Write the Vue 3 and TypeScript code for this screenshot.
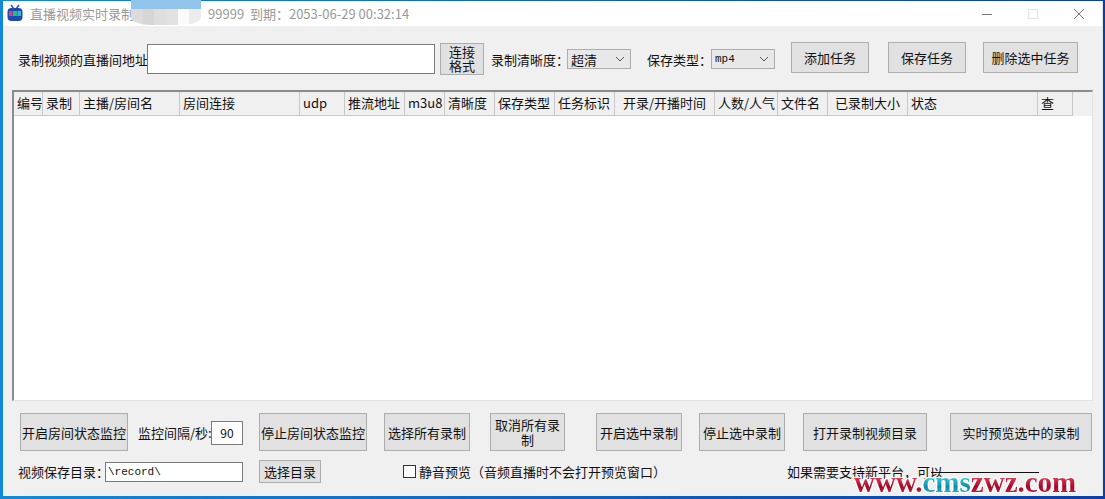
<template>
  <div class="desktop">
    <div class="window">
      <div class="titlebar">
        <svg class="app-icon" width="16" height="18" viewBox="0 0 16 18">
          <path d="M4 1 L7 5 M12 1 L9 5" stroke="#2a4fa8" stroke-width="1.4" fill="none" />
          <rect x="0.5" y="4" width="15" height="13" rx="4" fill="#1d49b5" />
          <rect x="2" y="7" width="3.5" height="5" fill="#e8397a" />
          <rect x="6" y="7" width="4" height="5" fill="#27c26a" />
          <rect x="10.5" y="7" width="3.5" height="5" fill="#35b6d8" />
        </svg>
        <span class="title">直播视频实时录制--</span>
        <span class="title title--hidden">当前版本：99999&nbsp;&nbsp;到期：2053-06-29 00:32:14</span>
        <div class="win-controls">
          <svg width="12" height="12" viewBox="0 0 12 12"><path d="M1 6.5H11" stroke="#777" /></svg>
          <svg width="12" height="12" viewBox="0 0 12 12"><rect x="1.5" y="1.5" width="9" height="9" fill="none" stroke="#e3e3e3" /></svg>
          <svg width="12" height="12" viewBox="0 0 12 12"><path d="M1 1L11 11M11 1L1 11" stroke="#777" /></svg>
        </div>
        <!-- smudge over the account name -->
        <div class="smudge">
          <div class="smudge__top"></div>
          <div class="smudge__cells">
            <i v-for="c in smudgeCells" :key="c" :style="{ background: c }"></i>
          </div>
        </div>
      </div>

      <div class="content">
        <div class="toolbar">
          <span class="label label--url">录制视频的直播间地址：</span>
          <div class="input input--url"></div>
          <button class="btn btn--format">连接<br />格式</button>
          <span class="label label--quality">录制清晰度：</span>
          <div class="select select--quality">
            <span>超清</span>
            <svg width="10" height="6" viewBox="0 0 10 6"><path d="M1 1L5 5L9 1" fill="none" stroke="#555" /></svg>
          </div>
          <span class="label label--type">保存类型：</span>
          <div class="select select--type">
            <span class="mono">mp4</span>
            <svg width="10" height="6" viewBox="0 0 10 6"><path d="M1 1L5 5L9 1" fill="none" stroke="#555" /></svg>
          </div>
          <button class="btn btn--add">添加任务</button>
          <button class="btn btn--save">保存任务</button>
          <button class="btn btn--del">删除选中任务</button>
        </div>

        <div class="table">
          <div class="thead">
            <div
              v-for="col in columns"
              :key="col.name"
              class="th"
              :class="{ 'th--center': col.center }"
              :style="{ width: col.width + 'px' }"
            >{{ col.name }}</div>
          </div>
        </div>

        <div class="actions">
          <button class="btn btn--a1">开启房间状态监控</button>
          <span class="label label--interval">监控间隔/秒:</span>
          <div class="input input--interval">90</div>
          <button class="btn btn--a2">停止房间状态监控</button>
          <button class="btn btn--a3">选择所有录制</button>
          <button class="btn btn--a4">取消所有录制</button>
          <button class="btn btn--a5">开启选中录制</button>
          <button class="btn btn--a6">停止选中录制</button>
          <button class="btn btn--a7">打开录制视频目录</button>
          <button class="btn btn--a8">实时预览选中的录制</button>
        </div>

        <div class="footer">
          <span class="label label--dir">视频保存目录：</span>
          <div class="input input--dir mono">\record\</div>
          <button class="btn btn--pick">选择目录</button>
          <span class="check"></span>
          <span class="label label--mute">静音预览（音频直播时不会打开预览窗口）</span>
          <span class="label label--support">如果需要支持新平台，可以</span>
          <span class="link-line"></span>
        </div>
      </div>
    </div>
    <div class="watermark"><span class="wm-red">www.</span><span class="wm-cyan">cms</span><span class="wm-red">zwz.com</span></div>
  </div>
</template>

<script setup lang="ts">
interface Column {
  name: string
  width: number
  center?: boolean
}

const columns: Column[] = [
  { name: '编号', width: 29 },
  { name: '录制', width: 37 },
  { name: '主播/房间名', width: 100 },
  { name: '房间连接', width: 120 },
  { name: 'udp', width: 45 },
  { name: '推流地址', width: 60 },
  { name: 'm3u8', width: 40 },
  { name: '清晰度', width: 50 },
  { name: '保存类型', width: 60 },
  { name: '任务标识', width: 60 },
  { name: '开录/开播时间', width: 100, center: true },
  { name: '人数/人气', width: 63 },
  { name: '文件名', width: 50 },
  { name: '已录制大小', width: 80, center: true },
  { name: '状态', width: 130 },
  { name: '查', width: 35 },
]

const smudgeCells = ['#dcdcdc', '#d6d6d6', '#dedede', '#e2e2e2', '#fbfbfb', '#ececec']
</script>

<style>
html,
body {
  margin: 0;
  overflow: hidden;
}
</style>

<style scoped>
.desktop {
  position: relative;
  width: 1105px;
  height: 499px;
  box-sizing: border-box;
  padding: 1px 2px 3px 3px;
  background: linear-gradient(90deg, #1289d8 0, #1289d8 3px, #0b3ea6 1102px);
  overflow: hidden;
  font-family: "Noto Sans CJK SC", "Noto Sans", sans-serif;
  font-size: 13px;
  color: #111;
}

.window {
  display: flex;
  flex-direction: column;
  height: 100%;
  background: #f0f0f0;
  border-right: 1px solid #e8e8e8;
}

.titlebar {
  position: relative;
  display: flex;
  align-items: center;
  flex: none;
  height: 25px;
  padding-left: 4px;
  background: #fff;
}

.app-icon {
  flex: none;
  margin-right: 7px;
  margin-top: -2px;
}

.title {
  color: #999;
  font-size: 13px;
  white-space: nowrap;
}

.title--hidden {
  margin-left: 0;
}

.win-controls {
  display: flex;
  gap: 34px;
  margin-left: auto;
  margin-right: 17px;
  align-items: center;
}

.smudge {
  position: absolute;
  left: 128px;
  top: -1px;
  width: 70px;
  height: 25px;
  border-radius: 0 0 20px 20px / 0 0 8px 8px;
  overflow: hidden;
}

.smudge__top {
  height: 9px;
  background: #90c4ea;
}

.smudge__cells {
  display: flex;
  height: 16px;
}

.smudge__cells i {
  flex: 1;
}

.content {
  display: flex;
  flex-direction: column;
  flex: 1;
  padding: 0 9px 0 9px;
}

.btn {
  flex: none;
  margin: 0;
  padding: 0;
  border: 1px solid #adadad;
  background: #e1e1e1;
  color: #111;
  font: inherit;
  line-height: 15px;
}

.label {
  flex: none;
  white-space: nowrap;
}

.input {
  flex: none;
  box-sizing: border-box;
  background: #fff;
  border: 1px solid #7a7a7a;
}

.mono {
  font-family: "Liberation Mono", "DejaVu Sans Mono", monospace;
  font-size: 11px;
}

.toolbar {
  display: flex;
  align-items: center;
  height: 34px;
  margin-top: 16px;
}

.label--url { margin-left: 6px; width: 129px; }
.input--url { width: 288px; height: 30px; margin-left: 0; }
.btn--format { width: 44px; height: 32px; margin-left: 5px; font-size: 13px; line-height: 14px; }
.label--quality { width: 76px; margin-left: 7px; }
.select {
  display: flex;
  flex: none;
  align-items: center;
  justify-content: space-between;
  box-sizing: border-box;
  height: 20px;
  padding: 0 5px 0 3px;
  border: 1px solid #adadad;
  background: #e8e8e8;
}
.select--quality { width: 64px; }
.label--type { width: 64px; margin-left: 16px; }
.select--type { width: 64px; }
.btn--add { width: 78px; height: 31px; margin-left: 16px; margin-top: -3px; }
.btn--save { width: 78px; height: 31px; margin-left: 19px; margin-top: -3px; }
.btn--del { width: 95px; height: 31px; margin-left: 17px; margin-top: -3px; }

.table {
  flex: none;
  box-sizing: border-box;
  width: 1081px;
  height: 311px;
  margin-top: 14px;
  background: #fff;
  border: 1px solid #e2e2e2;
  border-top: 2px solid #8c8c8c;
  border-left: 2px solid #8c8c8c;
}

.thead {
  display: flex;
  height: 24px;
  background: #f0f0f0;
}

.th {
  flex: none;
  box-sizing: border-box;
  padding-left: 3px;
  height: 24px;
  line-height: 22px;
  border-right: 1px solid #c8c8c8;
  border-bottom: 1px solid #c8c8c8;
  white-space: nowrap;
  overflow: hidden;
}

.th--center {
  padding-left: 0;
  text-align: center;
}

.actions {
  display: flex;
  align-items: center;
  height: 38px;
  margin-top: 12px;
}

.actions .btn { height: 38px; }
.btn--a1 { width: 108px; margin-left: 8px; }
.label--interval { width: 73px; margin-left: 10px; }
.input--interval { width: 32px; height: 24px; margin-top: 2px; line-height: 22px; text-align: center; font-size: 12px; }
.btn--a2 { width: 108px; margin-left: 16px; }
.btn--a3 { width: 86px; margin-left: 17px; }
.btn--a4 { width: 75px; margin-left: 20px; }
.btn--a5 { width: 86px; margin-left: 31px; }
.btn--a6 { width: 86px; margin-left: 17px; }
.btn--a7 { width: 124px; margin-left: 18px; }
.btn--a8 { width: 142px; margin-left: 23px; }

.footer {
  display: flex;
  align-items: center;
  height: 23px;
  margin-top: 9px;
}

.label--dir { width: 87px; margin-left: 6px; }
.input--dir { width: 138px; height: 20px; line-height: 18px; padding-left: 2px; }
.btn--pick { width: 62px; height: 23px; margin-left: 16px; }
.check {
  flex: none;
  box-sizing: border-box;
  width: 13px;
  height: 13px;
  margin-left: 82px;
  background: #fff;
  border: 1px solid #333;
}
.label--mute { margin-left: 3px; width: 368px; }
.label--support { width: 144px; }
.link-line {
  flex: none;
  width: 108px;
  height: 1px;
  background: #111;
  margin-top: 1px;
}

.watermark {
  position: absolute;
  left: 854px;
  top: 466px;
  font-family: "Liberation Serif", serif;
  font-size: 29px;
  font-weight: 700;
  line-height: 32px;
  white-space: nowrap;
  filter: drop-shadow(1px 0 0 #fff) drop-shadow(-1px 0 0 #fff) drop-shadow(0 1px 0 #fff) drop-shadow(0 -1px 0 #fff);
}

.wm-red,
.wm-cyan {
  -webkit-background-clip: text;
  background-clip: text;
  color: transparent;
}

.wm-red { background-image: linear-gradient(180deg, #f0405c 30%, #a00b28 65%, #d01c3c 85%); }
.wm-cyan { background-image: linear-gradient(180deg, #45d6e0 30%, #0b8ea8 65%, #30b0c8 85%); }
</style>
